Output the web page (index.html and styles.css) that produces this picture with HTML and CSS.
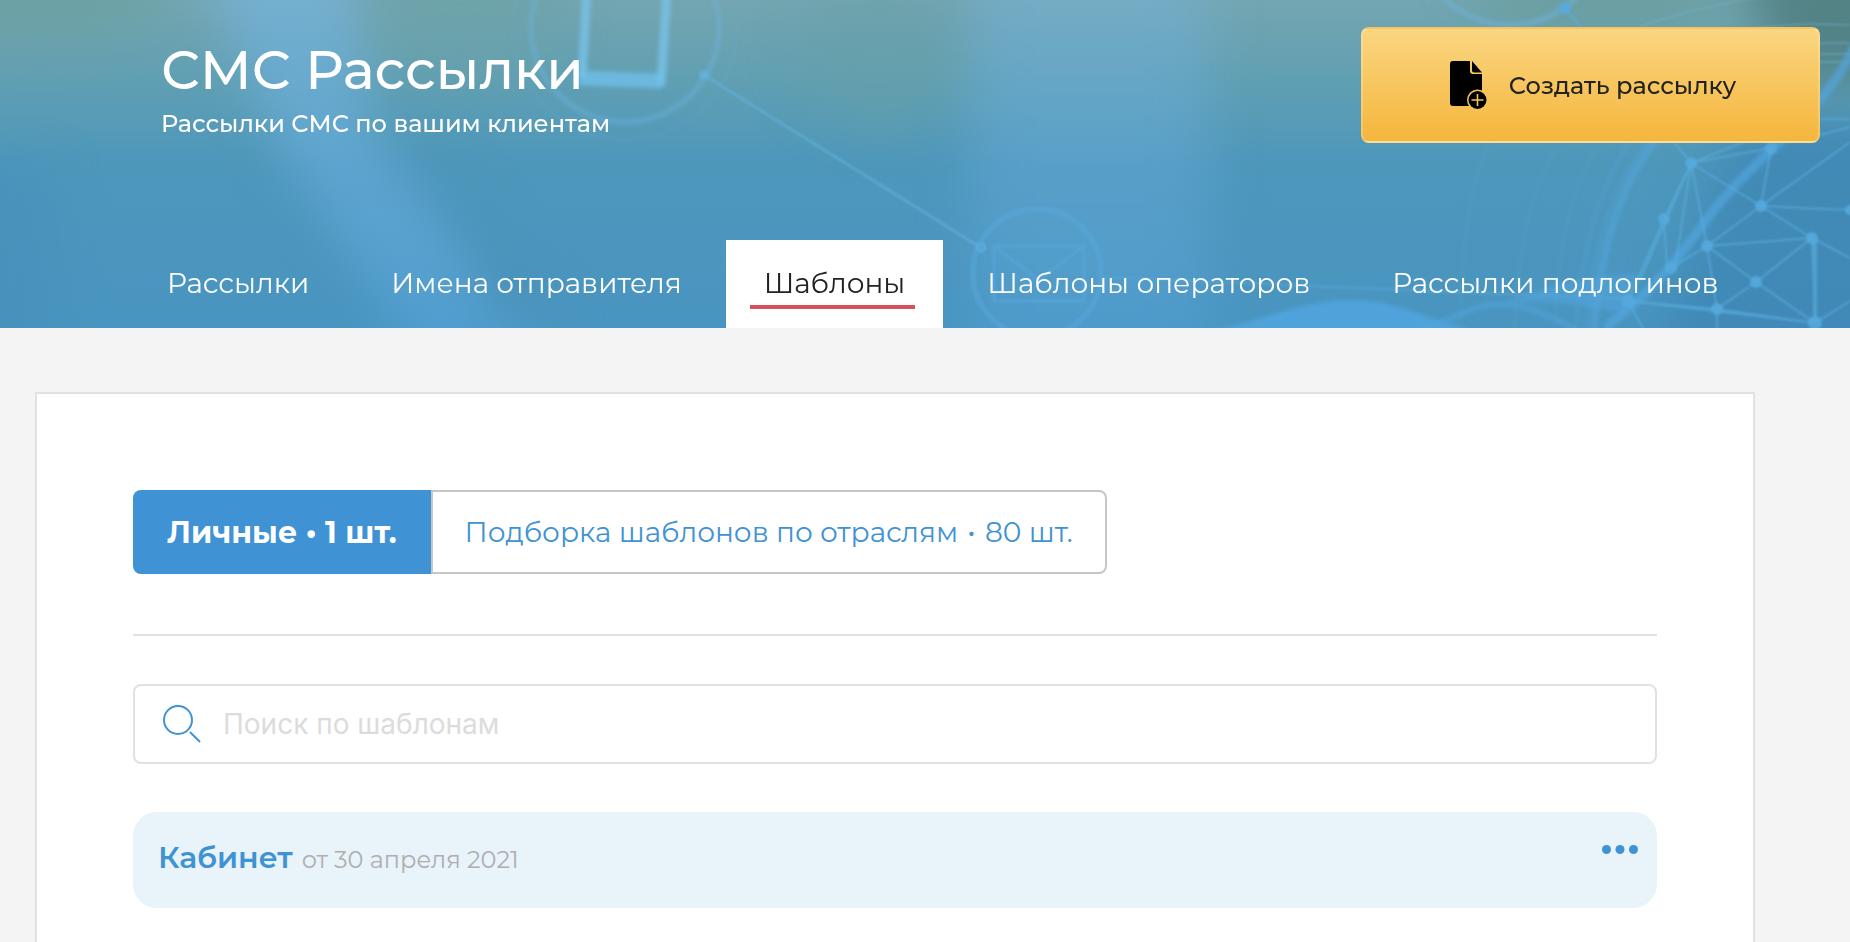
FILE: index.html
```html
<!DOCTYPE html>
<html lang="ru">
<head>
    <meta charset="UTF-8">
    <meta name="viewport" content="width=device-width, initial-scale=1.0">
    <title>СМС Рассылки</title>
    <link rel="stylesheet" href="styles.css">
</head>
<body>
    <header class="header">
        <!-- Фон шапки -->
        <svg class="header-bg" viewBox="0 0 1850 328" preserveAspectRatio="xMaxYMid slice" aria-hidden="true">
            <defs>
                <linearGradient id="base" x1="0" y1="0" x2="0" y2="1">
                    <stop offset="0" stop-color="#74a6b0"/>
                    <stop offset="0.25" stop-color="#609fb3"/>
                    <stop offset="0.5" stop-color="#4d97bb"/>
                    <stop offset="1" stop-color="#4995c1"/>
                </linearGradient>
                <linearGradient id="beam" x1="0" y1="0" x2="0" y2="1">
                    <stop offset="0" stop-color="#7ab5d9"/>
                    <stop offset="1" stop-color="#4e9dd3"/>
                </linearGradient>
                <filter id="soft" x="-50%" y="-50%" width="200%" height="200%" color-interpolation-filters="sRGB"><feGaussianBlur stdDeviation="24"/></filter>
                <filter id="glow" x="-20%" y="-20%" width="140%" height="140%" color-interpolation-filters="sRGB"><feGaussianBlur stdDeviation="2"/></filter>
                <filter id="thin" x="-20%" y="-20%" width="140%" height="140%" color-interpolation-filters="sRGB"><feGaussianBlur stdDeviation="0.8"/></filter>
            </defs>
            <rect width="1850" height="328" fill="url(#base)"/>
            <g filter="url(#soft)">
                <ellipse cx="40" cy="-10" rx="120" ry="50" fill="#6aa09f" opacity="0.7"/>
                <ellipse cx="460" cy="10" rx="100" ry="60" fill="#6ba2a6" opacity="0.6"/>
                <path d="M190-60h160l20 190 210 260H440L280 150z" fill="url(#beam)" opacity="0.75"/>
                <path d="M400 110l160 220h-60z" fill="#4890b4" opacity="0.7"/>
                <ellipse cx="880" cy="60" rx="80" ry="70" fill="#659fa8" opacity="0.5"/>
                <path d="M970-60h240v440H970z" fill="url(#beam)" opacity="0.5"/>
                <ellipse cx="1600" cy="0" rx="130" ry="30" fill="#649894" opacity="0.6"/>
                <path d="M1730-60h180v140h-130z" fill="#4c7b7c" opacity="0.8"/>
                <path d="M1740 120h170v270h-270z" fill="#3d86b4" opacity="0.75"/>
                <path d="M-40 170h90v220H-40z" fill="#468fbb" opacity="0.6"/>
            </g>

            <!-- Телефон -->
            <g fill="none" stroke="#6db4df" filter="url(#glow)">
                <circle cx="625" cy="28" r="94" stroke-width="5" opacity="0.5"/>
                <circle cx="625" cy="28" r="112" stroke-width="3" opacity="0.15"/>
                <path d="M587-10l-5 88M667-10l-6 95" stroke="#79c4ec" stroke-width="9" opacity="0.75"/>
                <path d="M579 78l84 3" stroke="#70c0ec" stroke-width="15" opacity="0.75"/>
            </g>
            <g fill="none" stroke="#64b0dc" stroke-width="3" filter="url(#thin)">
                <path d="M704 75l276 172" opacity="0.6"/>
                <circle cx="704" cy="75" r="4" fill="#6db6e0" opacity="0.7"/>
                <circle cx="981" cy="247" r="4" fill="#51a3dc" opacity="0.8"/>
                <path d="M1101 277l329 14 200 8" stroke="#58a8dc" opacity="0.45"/>
            </g>
            <!-- Конверт -->
            <g fill="none" stroke="#58a8dc" stroke-width="4" opacity="0.5" filter="url(#thin)">
                <circle cx="1037" cy="273" r="64" stroke-width="6"/>
                <path d="M994 246h90v55h-90zl45 34 45-34"/>
            </g>

            <!-- Кольца справа -->
            <g fill="none" stroke="#6fb3de" filter="url(#glow)">
                <circle cx="1510" cy="-69" r="94" stroke-width="5" opacity="0.6"/>
                <circle cx="1510" cy="-69" r="108" stroke-width="2" opacity="0.25"/>
                <path d="M1700 100c-60 40-98 110-107 240" stroke="#55a8e0" stroke-width="7" opacity="0.55"/>
                <path d="M1675 110c-50 50-82 110-90 230M1655 110c-45 50-72 110-80 230" stroke="#55a5d8" stroke-width="3" opacity="0.45"/>
                <path d="M1620 110c-45 60-62 120-66 230M1580 110c-45 60-62 120-66 230M1500 120c-30 60-38 100-40 220" stroke="#5aa8d4" stroke-width="3" opacity="0.2"/>
            </g>
            <g fill="none" stroke="#77b4cc" stroke-width="2" filter="url(#thin)" opacity="0.4">
                <path d="M1640 26c60-18 100-28 130-28M1740 30c60-8 80-6 110-5M1780 46c30-4 50-3 70-3M1790 54h60M1800 62h50"/>
            </g>

            <!-- Волна внизу -->
            <path d="M1200 332c60-8 90-30 150-32 50 0 80 22 130 32z" fill="#53aae6" opacity="0.7" filter="url(#glow)"/>
            <path d="M1420 328c40-8 50-24 80-24 40 0 80 30 120 50" fill="none" stroke="#53a6dc" stroke-width="5" opacity="0.6" filter="url(#glow)"/>
            <path d="M1500 304c50-20 90-30 140-30l-16 38c-30 0-50-14-124-8z" fill="#53a6e0" opacity="0.5" filter="url(#glow)"/>

            <path d="M1855 45c-30 70-100 110-145 170-30 40-50 70-105 113" fill="none" stroke="#54a8e2" stroke-width="9" opacity="0.65" filter="url(#glow)"/>

            <!-- Сетка -->
            <g fill="none" stroke="#5cb1e2" stroke-width="2" opacity="0.6" filter="url(#thin)">
                <path d="M1565 8l126 155 80-15M1691 163l70 43 51 32 38 20M1691 163l60-24M1691 163l16 83 10 63v22M1691 163l-27 56 3 49M1691 163l-16 105M1691 163l-51 117M1664 219l-36 82M1671 268l36-22 105-8-56 44-49-36 54-40 10-58M1761 206l89 4M1761 206l89-64M1812 238l3 85-59-41-39 27 98 14 35-22M1628 301l89 8M1628 301l16 29M1628 301l187 22M1820 119h30M1820 135l30-8"/>
                <path d="M1815 238v85" stroke-width="4"/>
            </g>
            <g fill="#57aadd" opacity="0.85" filter="url(#thin)">
                <circle cx="1565" cy="8" r="6"/>
                <circle cx="1691" cy="163" r="6"/>
                <circle cx="1664" cy="219" r="6"/>
                <circle cx="1671" cy="268" r="6"/>
                <circle cx="1707" cy="246" r="6"/>
                <circle cx="1761" cy="206" r="6"/>
                <circle cx="1771" cy="148" r="6"/>
                <circle cx="1812" cy="238" r="6"/>
                <circle cx="1756" cy="282" r="6"/>
                <circle cx="1717" cy="309" r="6"/>
                <circle cx="1815" cy="323" r="7"/>
                <circle cx="1628" cy="301" r="7"/>
                <circle cx="1850" cy="210" r="5"/>
            </g>
        </svg>

        <div class="header-top">
            <div class="header-title">
                <h1>СМС Рассылки</h1>
                <p>Рассылки СМС по вашим клиентам</p>
            </div>
            <button type="button" class="create-button">
                <svg width="38" height="49" viewBox="0 0 38 49" aria-hidden="true">
                    <path d="M3 0H20V10a3 3 0 0 0 3 3H32V45H3a3 3 0 0 1-3-3V3a3 3 0 0 1 3-3z"/>
                    <path d="M22 0l10 11.500H24a2 2 0 0 1-2-2z"/>
                    <circle cx="27.500" cy="39" r="10.500" fill="#f6c456"/>
                    <circle cx="27.500" cy="39" r="9"/>
                    <path d="M27.500 33v12M21.500 39h12" stroke="#f6c456" stroke-width="1.600"/>
                </svg>
                Создать рассылку
            </button>
        </div>

        <nav class="tabs">
            <a href="#" class="tab"><span>Рассылки</span></a>
            <a href="#" class="tab"><span>Имена отправителя</span></a>
            <a href="#" class="tab active"><span>Шаблоны</span></a>
            <a href="#" class="tab"><span>Шаблоны операторов</span></a>
            <a href="#" class="tab"><span>Рассылки подлогинов</span></a>
        </nav>
    </header>

    <main class="panel">
        <div class="switcher">
            <button type="button" class="switch active">Личные • 1 шт.</button>
            <button type="button" class="switch">Подборка шаблонов по отраслям <span class="dot">•</span> 80 шт.</button>
        </div>

        <label class="search">
            <svg width="40" height="40" viewBox="0 0 40 40" fill="none" stroke="#3f93d4" stroke-width="2" aria-hidden="true">
                <circle cx="16" cy="16" r="14"/>
                <path d="M28 28l10 10"/>
            </svg>
            <input type="text" placeholder="Поиск по шаблонам" aria-label="Поиск по шаблонам">
        </label>

        <!-- Шаблон -->
        <div class="template">
            <a href="#" class="template-name">Кабинет</a>
            <span class="template-date">от 30 апреля 2021</span>
            <button type="button" class="template-menu" aria-label="Меню">
                <svg width="36" height="9" viewBox="0 0 36 9" fill="#3f93d4" aria-hidden="true">
                    <circle cx="4.500" cy="4.500" r="4.500"/>
                    <circle cx="18" cy="4.500" r="4.500"/>
                    <circle cx="31.500" cy="4.500" r="4.500"/>
                </svg>
            </button>
        </div>
    </main>
</body>
</html>
```
FILE: styles.css
```css
* {
    box-sizing: border-box;
}

body {
    margin: 0;
    min-height: 100vh;
    display: flex;
    flex-direction: column;
    background-color: #f4f4f4;
    color: #222;
    font-family: Montserrat, Inter, "Noto Sans", sans-serif;
    font-size: 28px;
}

button, input {
    font-family: inherit;
}

button {
    cursor: pointer;
}

/* Header */
.header {
    position: relative;
    overflow: hidden;
    color: #fff;
}

.header-bg {
    position: absolute;
    top: 0;
    left: 0;
    width: 100%;
    height: 100%;
    z-index: -1;
}

.header-top {
    display: flex;
    justify-content: space-between;
    align-items: flex-start;
    padding: 27px 30px 0 161px;
}

.header-title {
    padding-top: 9px;
}

.header-title h1 {
    margin: 0;
    font-size: 54px;
    line-height: 68px;
    font-weight: 500;
}

.header-title p {
    margin: 6px 0 0;
    font-size: 24px;
    line-height: 28px;
    font-weight: 500;
}

.create-button {
    display: flex;
    justify-content: center;
    align-items: center;
    gap: 21px;
    width: 459px;
    height: 116px;
    padding: 0 0 0 5px;
    border: 2px solid rgba(255, 255, 255, 0.2);
    border-radius: 8px;
    background-image: linear-gradient(#fad681, #f5b63c);
    color: #222;
    font-size: 24px;
    font-weight: 500;
}

.tabs {
    display: flex;
    gap: 6px;
    margin-top: 97px;
    padding-left: 129px;
}

.tab {
    padding: 26px 28px 19px 24px;
    color: #fff;
    text-decoration: none;
}

.tab span {
    display: block;
    padding: 0 10px 5px 14px;
    border-bottom: 4px solid transparent;
    line-height: 34px;
}

.tab.active {
    background-color: #fff;
    color: #222;
}

.tab.active span {
    border-bottom-color: #d94f5c;
}

/* Panel */
.panel {
    flex: 1;
    margin: 64px 95px 0 35px;
    padding: 96px 96px 32px;
    border: 2px solid #e1e1e1;
    border-bottom: none;
    background-color: #fff;
}

.switcher {
    display: flex;
    padding-bottom: 60px;
    border-bottom: 2px solid #e1e1e1;
}

.switch {
    height: 84px;
    padding: 0 32px;
    border: 2px solid #c6c6c6;
    border-radius: 0 8px 8px 0;
    background-color: #fff;
    color: #3f93d4;
    font-size: 28px;
}

.switch.active {
    padding: 0 34px;
    border: none;
    border-radius: 8px 0 0 8px;
    background-color: #3f93d4;
    color: #fff;
    font-size: 30px;
    font-weight: 700;
}

.dot {
    margin: 0 2px;
}

.search {
    display: flex;
    align-items: center;
    gap: 21px;
    height: 80px;
    margin-top: 48px;
    padding: 0 27px;
    border: 2px solid #e1e1e1;
    border-radius: 8px;
}

.search input {
    flex: 1;
    padding: 0;
    border: none;
    outline: none;
    font-family: Inter, sans-serif;
    font-size: 28px;
}

.search input::placeholder {
    color: #dcdcdc;
}

.template {
    display: flex;
    align-items: baseline;
    gap: 9px;
    height: 96px;
    margin-top: 48px;
    padding: 27px 19px 0 25px;
    border-radius: 24px;
    background-color: #e8f3fa;
}

.template-name {
    color: #3f93d4;
    font-size: 30px;
    font-weight: 600;
    text-decoration: none;
}

.template-date {
    color: #afafaf;
    font-size: 24px;
}

.template-menu {
    display: flex;
    align-self: flex-start;
    margin-left: auto;
    padding: 6px 0;
    border: none;
    background: none;
}
```
